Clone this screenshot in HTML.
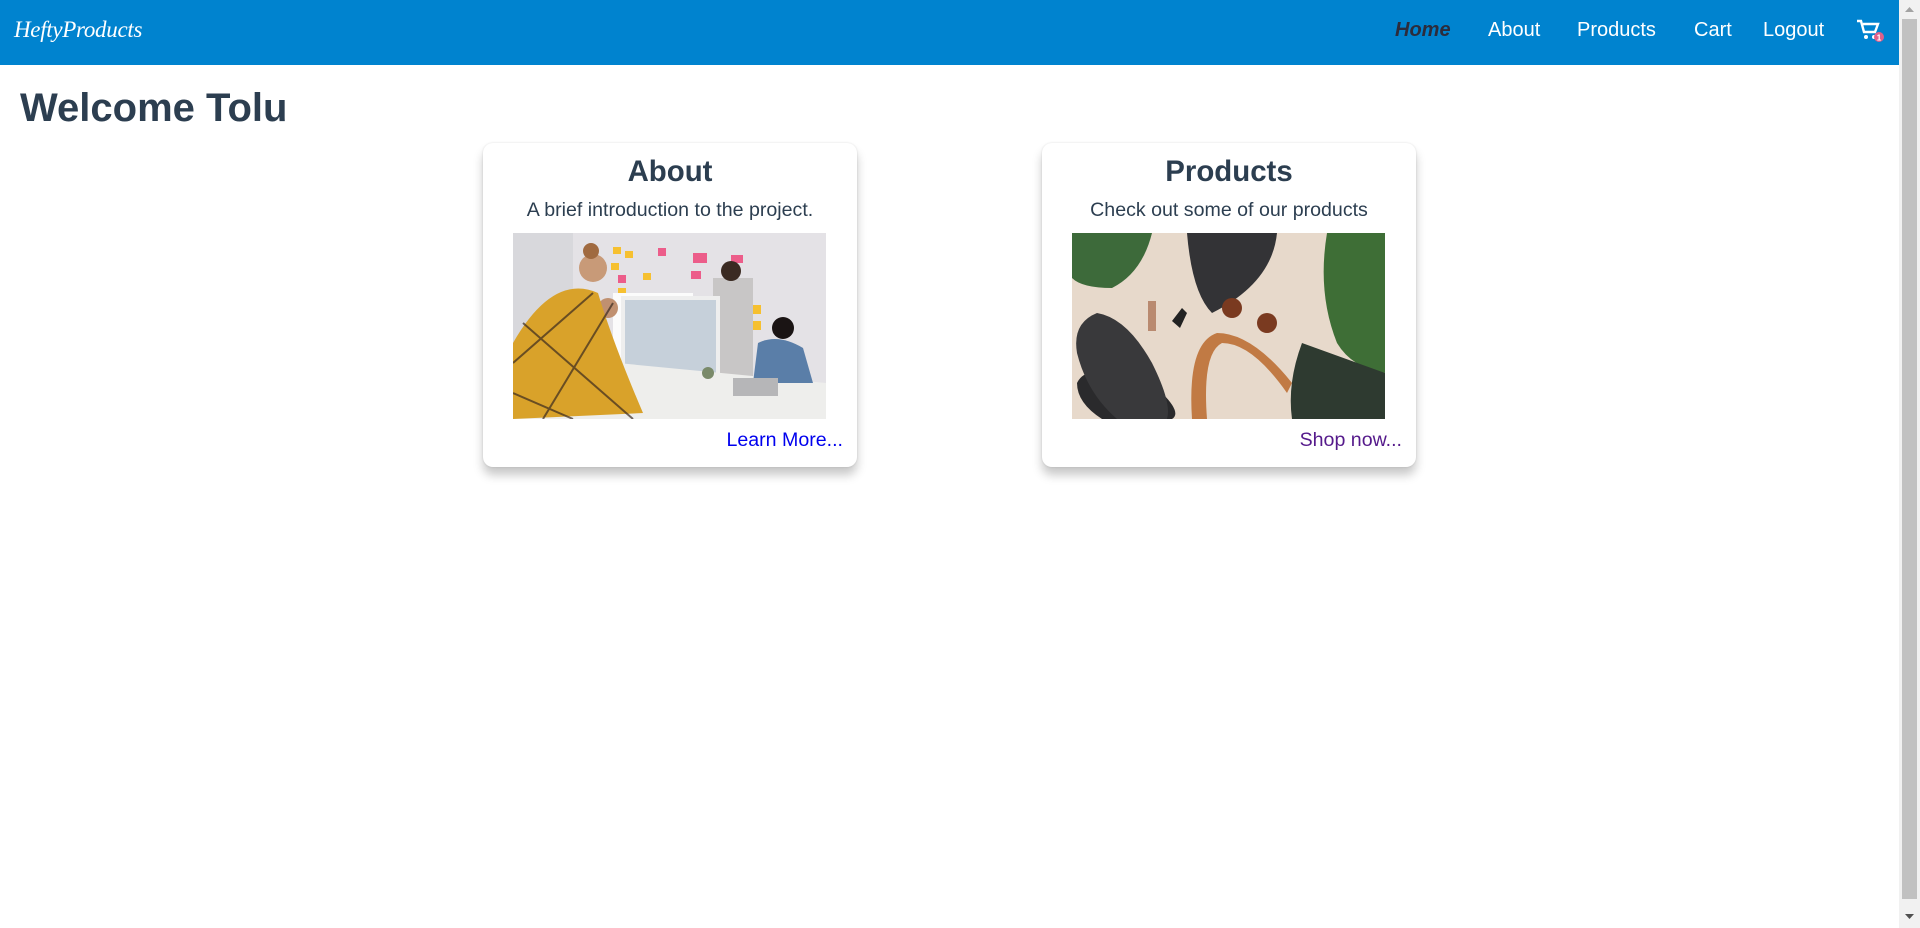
<!DOCTYPE html>
<html><head><meta charset="utf-8"><style>
*{margin:0;padding:0;box-sizing:border-box}
body{width:1920px;height:928px;overflow:hidden;background:#fff;font-family:"Liberation Sans",Arial,sans-serif;color:#2c3e50;position:relative}
.nav{position:absolute;left:0;top:0;width:1899px;height:65px;background:#0083cf}
.logo{position:absolute;left:14px;top:17px;font-family:"Liberation Serif",serif;font-style:italic;font-size:23px;color:#fff;letter-spacing:-0.3px}
.ni{position:absolute;top:19px;font-size:20px;color:#fff}
.home{font-weight:bold;font-style:italic;color:#2c2c3c}
.sb{position:absolute;left:1899px;top:0;width:21px;height:928px;background:#f1f1f1}
.thumb{position:absolute;left:3px;top:19px;width:15px;height:880px;background:#c1c1c1}
h1{position:absolute;left:20px;top:86px;font-size:40px;font-weight:bold;color:#2c3e50}
.card{position:absolute;top:143px;width:374px;height:324px;background:#fff;border-radius:10px;box-shadow:0 8px 10px rgba(0,0,0,.22),0 0 2px rgba(0,0,0,.12)}
.t{position:absolute;left:0;width:100%;text-align:center;font-size:29.4px;font-weight:bold;top:12px}
.s{position:absolute;left:0;width:100%;text-align:center;font-size:19.6px;top:56px}
.img{position:absolute;left:30px;top:90px;width:313px;height:186px;overflow:hidden}
.lk{position:absolute;right:14px;top:286px;font-size:19.6px}
</style></head><body>
<div class="nav">
<div class="logo">HeftyProducts</div>
<div class="ni home" style="left:1395px">Home</div>
<div class="ni" style="left:1488px">About</div>
<div class="ni" style="left:1577px">Products</div>
<div class="ni" style="left:1694px">Cart</div>
<div class="ni" style="left:1763px">Logout</div>
<svg style="position:absolute;left:1856px;top:19px" width="30" height="26" viewBox="0 0 30 26"><path d="M1 2h4l3 11h11l3-8H7" fill="none" stroke="#fff" stroke-width="2.4"/><circle cx="10" cy="18" r="2" fill="#fff"/><circle cx="18" cy="18" r="2" fill="#fff"/><circle cx="23" cy="18" r="5" fill="#e0608a"/><text x="23" y="21.5" font-size="8" font-weight="bold" text-anchor="middle" fill="#fff" font-family="Liberation Sans">1</text></svg>
</div>
<div class="sb"><div class="thumb"></div>
<svg style="position:absolute;left:5px;top:5px" width="11" height="8"><path d="M1 7L5.5 2L10 7Z" fill="#a3a3a3"/></svg>
<svg style="position:absolute;left:5px;top:913px" width="11" height="8"><path d="M1 1L5.5 6L10 1Z" fill="#505050"/></svg>
</div>
<h1>Welcome Tolu</h1>
<div class="card" style="left:483px">
<div class="t">About</div><div class="s">A brief introduction to the project.</div>
<div class="img"><svg width="313" height="186" viewBox="0 0 313 186">
<rect width="313" height="186" fill="#e4e2e6"/><rect x="0" y="0" width="60" height="186" fill="#d8d8dc"/>
<g fill="#f6c030"><rect x="100" y="14" width="8" height="7"/><rect x="112" y="18" width="8" height="7"/><rect x="98" y="30" width="8" height="7"/><rect x="130" y="40" width="8" height="7"/><rect x="105" y="55" width="8" height="7"/><rect x="120" y="60" width="8" height="7"/><rect x="240" y="72" width="8" height="9"/><rect x="240" y="88" width="8" height="9"/></g>
<g fill="#ec5d8a"><rect x="145" y="15" width="8" height="8"/><rect x="180" y="20" width="14" height="10"/><rect x="178" y="38" width="10" height="8"/><rect x="218" y="22" width="12" height="8"/><rect x="105" y="42" width="8" height="8"/><rect x="225" y="45" width="8" height="8"/></g>
<rect x="100" y="60" width="80" height="110" fill="#fbfbfb"/>
<rect x="200" y="45" width="40" height="100" fill="#c8c6c6"/><circle cx="218" cy="38" r="10" fill="#3a2a22"/>
<rect x="110" y="65" width="95" height="100" fill="#c6d0da" stroke="#eee" stroke-width="4"/>
<path d="M0 120 L313 150 L313 186 L0 186Z" fill="#eeeeec"/>
<circle cx="270" cy="95" r="11" fill="#1a1414"/><path d="M245 110 Q265 100 290 115 L300 150 L240 150Z" fill="#5a7ea8"/>
<circle cx="195" cy="140" r="6" fill="#7a8a6a"/><rect x="220" y="145" width="45" height="18" fill="#b6b6b8"/>
<circle cx="95" cy="75" r="10" fill="#c09070"/><path d="M60 90 Q75 70 95 100 L110 160 L40 165Z" fill="#e0a030"/>
<circle cx="80" cy="35" r="14" fill="#c89a78"/><circle cx="78" cy="18" r="8" fill="#a06a40"/>
<path d="M0 110 Q40 40 85 60 Q100 110 130 180 L0 186Z" fill="#d9a22a"/>
<g stroke="#3a2a20" stroke-width="2" opacity=".7"><path d="M10 90 L120 186M0 130L80 60M30 186L100 70M0 160L60 186"/></g>
</svg></div>
<a class="lk" style="color:#0000ee">Learn More...</a>
</div>
<div class="card" style="left:1042px">
<div class="t">Products</div><div class="s">Check out some of our products</div>
<div class="img"><svg width="313" height="186" viewBox="0 0 313 186">
<rect width="313" height="186" fill="#e7d9cb"/>
<path d="M0 0 H80 Q70 40 40 55 Q10 55 0 45Z" fill="#3d6a3a"/>
<path d="M255 0 L313 0 L313 140 Q280 135 265 110 Q245 60 255 0Z" fill="#3e6e36"/>
<path d="M115 0 H205 Q200 50 140 80 Q120 60 115 0Z" fill="#333336"/>
<path d="M5 150 Q10 140 20 140 Q60 150 90 160 Q110 180 100 186 H30 Q5 170 5 150Z" fill="#2a2a2c"/>
<path d="M5 120 Q0 90 25 80 Q55 85 80 130 Q100 170 95 186 H45 Q15 160 5 120Z" fill="#39393b"/>
<rect x="76" y="68" width="8" height="30" fill="#b98a70"/>
<path d="M100 88 L110 75 L115 80 L108 95Z" fill="#222"/>
<circle cx="160" cy="75" r="10" fill="#7a3a20"/><circle cx="195" cy="90" r="10" fill="#7a3a20"/>
<path d="M120 186 Q115 110 145 100 Q180 100 220 150 L215 160 Q180 110 150 110 Q130 120 135 186Z" fill="#c17a44"/>
<path d="M230 110 L313 140 L313 186 L220 186 Q215 150 230 110Z" fill="#2e3a30"/>
</svg></div>
<a class="lk" style="color:#551a8b">Shop now...</a>
</div>
</body></html>
